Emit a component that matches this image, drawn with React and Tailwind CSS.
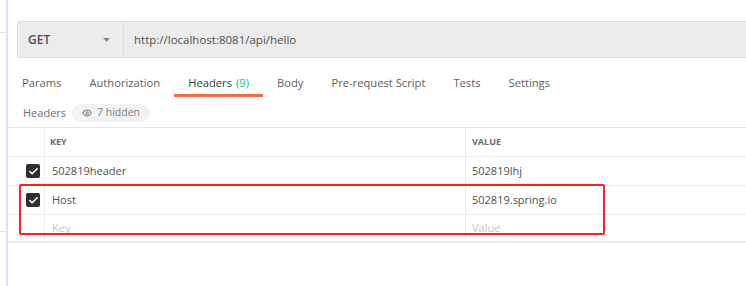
import React from "react";
import { Eye, Check } from "lucide-react";

const font = { fontFamily: '"Open Sans", "Liberation Sans", sans-serif' };

const tabs = [
  { label: "Params" },
  { label: "Authorization" },
  { label: "Headers", count: "(9)", active: true },
  { label: "Body" },
  { label: "Pre-request Script" },
  { label: "Tests" },
  { label: "Settings" },
];

const rows = [
  { key: "502819header", value: "502819lhj", checked: true },
  { key: "Host", value: "502819.spring.io", checked: true },
];

function Checkbox() {
  return (
    <div className="w-[14px] h-[14px] rounded-[2px] bg-[#2f2f2f] flex items-center justify-center">
      <Check size={11} strokeWidth={3.5} color="#fff" />
    </div>
  );
}

export default function App() {
  return (
    <div className="relative flex h-[286px] w-[746px] bg-white overflow-hidden" style={font}>
      {/* left gutter */}
      <div className="w-[6px] shrink-0 flex flex-col">
        <div className="h-[33px] border-b border-[#e2e2e2]" />
        <div className="h-[199px] border-b border-[#e2e2e2]" />
      </div>
      <div className="w-[2px] shrink-0 bg-[#d5e4f5]" />

      <div className="flex-1 flex flex-col min-w-0">
        {/* url bar */}
        <div className="mt-[21px] ml-[9px] h-[37px] flex bg-[#ececec] border-y border-l border-[#dcdcdc] rounded-l-[3px]">
          <div className="w-[106px] flex items-center justify-between pl-[10px] pr-[13px] border-r border-[#dcdcdc]">
            <span className="text-[12px] font-semibold text-[#505050]">GET</span>
            <svg width="7" height="4" viewBox="0 0 7 4">
              <path d="M0 0 L7 0 L3.5 4 Z" fill="#8a8a8a" />
            </svg>
          </div>
          <div className="flex items-center pl-[10px] text-[11.5px] text-[#505050]">
            http://localhost:8081/api/hello
          </div>
        </div>

        {/* tabs */}
        <div className="mt-[12px] flex h-[27px]">
          {tabs.map((t) => (
            <div
              key={t.label}
              className={
                "px-[14px] flex items-center text-[11.2px] " +
                (t.active
                  ? "border-b-[3px] border-[#f26b3a] text-[#3a3a3a] pt-[3px]"
                  : "text-[#606060]")
              }
            >
              <span>{t.label}</span>
              {t.count && <span className="ml-[4px] text-[#26b47f]">{t.count}</span>}
            </div>
          ))}
        </div>

        {/* headers label */}
        <div className="mt-[7px] h-[18px] flex items-center pl-[15px]">
          <span className="text-[11px] text-[#707070]">Headers</span>
          <div className="ml-[6px] h-[18px] px-[10px] flex items-center gap-[5px] rounded-full bg-[#f2f2f2] text-[10.5px] text-[#808080]">
            <Eye size={10} strokeWidth={2.5} />
            <span>7 hidden</span>
          </div>
        </div>

        {/* table */}
        <div className="mt-[5px] border-t border-[#e6e6e6]">
          <div className="flex h-[29px] border-b border-[#ececec]">
            <div className="w-[37px] border-r border-[#ececec]" />
            <div className="w-[421px] border-r border-[#ececec] flex items-center pl-[5px] text-[9px] font-bold text-[#6a6a6a]">
              KEY
            </div>
            <div className="flex-1 flex items-center pl-[6px] text-[9px] font-bold text-[#6a6a6a]">
              VALUE
            </div>
          </div>
          {rows.map((r) => (
            <div key={r.key} className="flex h-[29px] border-b border-[#ececec]">
              <div className="w-[37px] border-r border-[#ececec] flex items-center pl-[18px]">
                <Checkbox />
              </div>
              <div className="w-[421px] border-r border-[#ececec] flex items-center pl-[7px] text-[11px] text-[#505050]">
                {r.key}
              </div>
              <div className="flex-1 flex items-center pl-[6px] text-[11px] text-[#505050]">
                {r.value}
              </div>
            </div>
          ))}
          <div className="flex h-[28px] border-b-2 border-[#ededed]">
            <div className="w-[37px] border-r border-[#ececec]" />
            <div className="w-[421px] border-r border-[#ececec] flex items-center pl-[7px] text-[11px] text-[#c4c4c4]">
              Key
            </div>
            <div className="flex-1 flex items-center pl-[6px] text-[11px] text-[#c4c4c4]">
              Value
            </div>
          </div>
        </div>
      </div>

      {/* red annotation box */}
      <div className="absolute left-[19px] top-[184px] w-[586px] h-[51px] border-2 border-[#ff2020] rounded-[2px]" />
    </div>
  );
}
